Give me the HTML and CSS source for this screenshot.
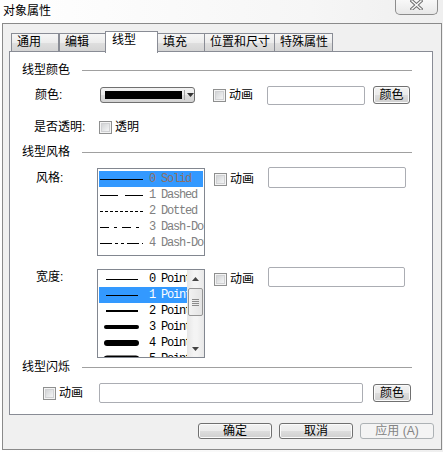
FILE: index.html
```html
<!DOCTYPE html>
<html>
<head>
<meta charset="utf-8">
<title>对象属性</title>
<link rel="stylesheet" href="styles.css">
</head>
<body>

<div class="titlebar">
 <span class="title">对象属性</span>
 <span class="close">
  <svg width="13" height="10" viewBox="0 0 13 10"><path d="M2 1 L11 9 M11 1 L2 9" stroke="#707070" stroke-width="3.4" stroke-linecap="square"/><path d="M2 1 L11 9 M11 1 L2 9" stroke="#fafafa" stroke-width="1.4" stroke-linecap="square"/></svg>
 </span>
</div>

<div class="frame">
 <div class="tabs">
  <span class="tab">通用</span>
  <span class="tab">编辑</span>
  <span class="tab active">线型</span>
  <span class="tab">填充</span>
  <span class="tab">位置和尺寸</span>
  <span class="tab">特殊属性</span>
 </div>

 <div class="panel">
  <div class="group"><span>线型颜色</span></div>
  <div class="row r-color">
   <span class="label">颜色:</span>
   <span class="combo"><span class="swatch"></span><span class="sep"></span><svg width="7" height="4"><path d="M0 0 H7 L3.5 4 Z" fill="#333"/></svg></span>
   <span class="anim"><span class="check"></span>动画</span>
   <span class="field f-short"></span>
   <span class="btn">颜色</span>
  </div>
  <div class="row r-trans">
   <span class="label">是否透明:</span>
   <span class="anim"><span class="check"></span>透明</span>
  </div>

  <div class="group"><span>线型风格</span></div>
  <div class="row r-list r-style">
   <span class="label">风格:</span>
   <div class="list styles">
    <div class="item sel"><svg class="sample" width="44" height="16"><line x1="1" y1="8.5" x2="44" y2="8.5" stroke="#000"/></svg><span>0 Solid</span></div>
    <div class="item"><svg class="sample" width="44" height="16"><line x1="1" y1="8.5" x2="44" y2="8.5" stroke="#000" stroke-dasharray="18 7"/></svg><span>1 Dashed</span></div>
    <div class="item"><svg class="sample" width="44" height="16"><line x1="1" y1="8.5" x2="44" y2="8.5" stroke="#000" stroke-dasharray="3 2"/></svg><span>2 Dotted</span></div>
    <div class="item"><svg class="sample" width="44" height="16"><line x1="1" y1="8.5" x2="44" y2="8.5" stroke="#000" stroke-dasharray="9 5 3 5"/></svg><span>3 Dash-Dot</span></div>
    <div class="item"><svg class="sample" width="44" height="16"><line x1="1" y1="8.5" x2="44" y2="8.5" stroke="#000" stroke-dasharray="12 3 3 3 3 3"/></svg><span>4 Dash-Dot-Dot</span></div>
   </div>
   <span class="anim"><span class="check"></span>动画</span>
   <span class="field f-long"></span>
  </div>

  <div class="row r-list r-width">
   <span class="label">宽度:</span>
   <div class="list widths">
    <div class="items">
     <div class="item"><svg class="sample" width="44" height="16"><line x1="7" y1="8.5" x2="39" y2="8.5" stroke="#000"/></svg><span>0 Point</span></div>
     <div class="item sel"><svg class="sample" width="44" height="16"><line x1="7" y1="8.5" x2="39" y2="8.5" stroke="#000"/></svg><span>1 Point</span></div>
     <div class="item"><svg class="sample" width="44" height="16"><line x1="7" y1="8" x2="39" y2="8" stroke="#000" stroke-width="2"/></svg><span>2 Point</span></div>
     <div class="item"><svg class="sample" width="44" height="16"><line x1="7" y1="8" x2="38" y2="8" stroke="#000" stroke-width="4" stroke-linecap="round"/></svg><span>3 Point</span></div>
     <div class="item"><svg class="sample" width="44" height="16"><line x1="8" y1="8" x2="37" y2="8" stroke="#000" stroke-width="6" stroke-linecap="round"/></svg><span>4 Point</span></div>
     <div class="item"><svg class="sample" width="44" height="16"><line x1="8" y1="8" x2="37" y2="8" stroke="#000" stroke-width="7" stroke-linecap="round"/></svg><span>5 Point</span></div>
    </div>
    <div class="vscroll">
     <span class="arrow"><svg width="7" height="4"><path d="M0 4 H7 L3.5 0 Z" fill="#444"/></svg></span>
     <span class="thumb"><i></i><i></i><i></i><i></i></span>
     <span class="arrow down"><svg width="7" height="4"><path d="M0 0 H7 L3.5 4 Z" fill="#444"/></svg></span>
    </div>
   </div>
   <span class="anim"><span class="check"></span>动画</span>
   <span class="field f-long f-w"></span>
  </div>

  <div class="group"><span>线型闪烁</span></div>
  <div class="row r-flash">
   <span class="anim"><span class="check"></span>动画</span>
   <span class="field f-wide"></span>
   <span class="btn">颜色</span>
  </div>
 </div>

 <div class="buttons">
  <span class="btn big">确定</span>
  <span class="btn big">取消</span>
  <span class="btn big off">应用 (A)</span>
 </div>
</div>

</body>
</html>
```

FILE: styles.css
```css
body {
 margin: 0;
 width: 443px;
 height: 452px;
 overflow: hidden;
 background: linear-gradient(to right, #ffffff, #f6f6f6 70%, #efefef);
 font-family: "Liberation Sans", "Noto Sans CJK SC", sans-serif;
 font-size: 12px;
 color: #000;
}

/* title bar */
.titlebar {
 height: 23px;
 display: flex;
 justify-content: space-between;
 align-items: flex-start;
}
.title {
 padding: 4px 0 0 3px;
 line-height: 14px;
}
.close {
 width: 43px;
 height: 15px;
 margin-right: 5px;
 box-sizing: border-box;
 border: 1px solid #8c8c8c;
 border-top: 0;
 border-radius: 0 0 5px 5px;
 background: linear-gradient(#f8f8f8, #e8e8e8);
 display: flex;
 justify-content: center;
}

/* dialog frame */
.frame {
 margin-left: 2px;
 width: 440px;
 height: 427px;
 box-sizing: border-box;
 border: 1px solid #8a8a8a;
 background: #f0f0f0;
}

.tabs {
 display: flex;
 align-items: flex-end;
 height: 20px;
 margin-top: 7px;
 padding-left: 8px;
}
.tab {
 box-sizing: border-box;
 height: 18px;
 min-width: 48px;
 padding: 0 4px 0 5px;
 line-height: 17px;
 border: 1px solid #898c95;
 border-bottom: 0;
 background: linear-gradient(#f6f6f6, #ececec 50%, #dfdfdf 51%, #d4d4d4);
 margin-left: -1px;
 white-space: nowrap;
}
.tab:first-child {
 margin-left: 0;
}
.tab:nth-child(2) {
 margin-left: 0;
 min-width: 47px;
}
.tab.active {
 position: relative;
 z-index: 1;
 height: 22px;
 min-width: 53px;
 margin-bottom: -2px;
 padding-left: 6px;
 line-height: 17px;
 background: #fff;
}

.panel {
 margin-left: 6px;
 width: 424px;
 height: 364px;
 box-sizing: border-box;
 border: 1px solid #898c95;
 background: #fff;
 padding: 10px 20px 11px 12px;
}

.group {
 display: flex;
 align-items: center;
 height: 16px;
 line-height: 16px;
}
.group::after {
 content: "";
 flex: 1;
 height: 1px;
 margin-left: 12px;
 background: #a0a0a0;
}

.row {
 display: flex;
 align-items: center;
}
.label {
 box-sizing: border-box;
 flex: none;
 padding-left: 13px;
 width: 78px;
 line-height: 14px;
 white-space: nowrap;
}

.r-color {
 height: 20px;
 margin-top: 7px;
}
.r-color .anim {
 margin-left: 18px;
}
.r-trans {
 height: 14px;
 margin-top: 15px;
}
.r-trans .label {
 width: 77px;
 padding-left: 12px;
}
.r-trans + .group {
 margin-top: 10px;
}

.r-list {
 align-items: flex-start;
}
.r-list .label {
 width: 75px;
 padding-left: 14px;
 margin-top: 4px;
}
.r-list .anim {
 margin-left: 9px;
 margin-top: 5px;
}
.r-style {
 margin-top: 7px;
}
.r-width {
 margin-top: 11px;
}
.r-width .label {
 margin-top: 3px;
}
.r-width + .group {
 margin-top: 1px;
}

.r-flash {
 height: 20px;
 margin-top: 8px;
 padding-left: 21px;
}
.r-flash .anim {
 width: 56px;
}
.r-flash .btn {
 margin-left: 10px;
 width: 38px;
}

/* controls */
.combo {
 box-sizing: border-box;
 flex: none;
 width: 95px;
 height: 16px;
 border: 1px solid #707070;
 border-radius: 3px;
 background: linear-gradient(#f2f2f2, #ebebeb 50%, #dddddd 51%, #d2d2d2);
 display: flex;
 align-items: center;
 padding-left: 4px;
}
.swatch {
 width: 78px;
 height: 8px;
 background: #000;
}
.sep {
 width: 1px;
 height: 10px;
 margin: 0 2px;
 background: #a8a8a8;
}

.anim {
 flex: none;
 display: flex;
 align-items: center;
 width: 54px;
 line-height: 14px;
 white-space: nowrap;
}
.check {
 box-sizing: border-box;
 flex: none;
 width: 13px;
 height: 13px;
 margin-right: 3px;
 border: 1px solid #8e8f8f;
 background: linear-gradient(135deg, #c9cbcd, #eeeff0 70%, #f6f6f6);
 box-shadow: inset 0 0 0 1px #f4f4f4, inset 0 0 0 2px #d0d1d3;
}

.field {
 box-sizing: border-box;
 flex: none;
 height: 19px;
 border: 1px solid #abadb3;
 border-radius: 2px;
 background: #fff;
}
.f-short {
 width: 98px;
}
.f-long {
 width: 138px;
 height: 21px;
}
.f-w {
 height: 20px;
 width: 137px;
}
.f-wide {
 width: 264px;
 height: 20px;
}

.btn {
 box-sizing: border-box;
 flex: none;
 display: flex;
 justify-content: center;
 align-items: center;
 width: 37px;
 height: 18px;
 margin-left: 8px;
 border: 1px solid #707070;
 border-radius: 3px;
 background: linear-gradient(#f2f2f2, #ebebeb 50%, #dddddd 51%, #cfcfcf);
 box-shadow: inset 0 0 0 1px #fbfbfb;
 line-height: 14px;
 white-space: nowrap;
}

/* list boxes */
.list {
 box-sizing: border-box;
 flex: none;
 width: 108px;
 border: 1px solid #828790;
 background: #fff;
 overflow: hidden;
 font-family: "Liberation Mono", monospace;
 font-size: 12px;
 letter-spacing: -1.2px;
}
.styles {
 height: 88px;
 margin-top: 1px;
 padding: 2px 1px;
 color: #808080;
}
.widths {
 height: 89px;
 margin-top: 2px;
 display: flex;
}
.items {
 flex: 1;
 overflow: hidden;
 padding: 1px 0 0 1px;
}
.item {
 display: flex;
 align-items: center;
 height: 16px;
 white-space: nowrap;
}
.sample {
 flex: none;
 margin: 0 6px 0 0;
}
.item.sel {
 background: #3399ff;
}
.styles .item.sel {
 color: #8c7068;
}
.widths .item.sel {
 color: #fff;
}

.vscroll {
 flex: none;
 width: 17px;
 display: flex;
 flex-direction: column;
 align-items: center;
 background: linear-gradient(to right, #e6e6e6, #f4f4f4 40%, #f4f4f4 60%, #e8e8e8);
}
.arrow {
 height: 17px;
 display: flex;
 align-items: center;
 justify-content: center;
}
.arrow.down {
 margin-top: auto;
 height: 16px;
}
.thumb {
 box-sizing: border-box;
 width: 15px;
 height: 28px;
 margin-top: 1px;
 border: 1px solid #959595;
 border-radius: 2px;
 background: linear-gradient(to right, #f2f2f2, #e4e4e4);
 display: flex;
 flex-direction: column;
 align-items: center;
 justify-content: center;
 gap: 1px;
}
.thumb i {
 width: 7px;
 height: 1px;
 background: #8a8a8a;
}

/* bottom buttons */
.buttons {
 display: flex;
 justify-content: flex-end;
 gap: 7px;
 margin-top: 8px;
 padding-right: 7px;
}
.btn.big {
 width: 74px;
 height: 16px;
 margin-left: 0;
}
.btn.off {
 border-color: #adb2b5;
 background: #f4f4f4;
 box-shadow: none;
 color: #838383;
}
```
